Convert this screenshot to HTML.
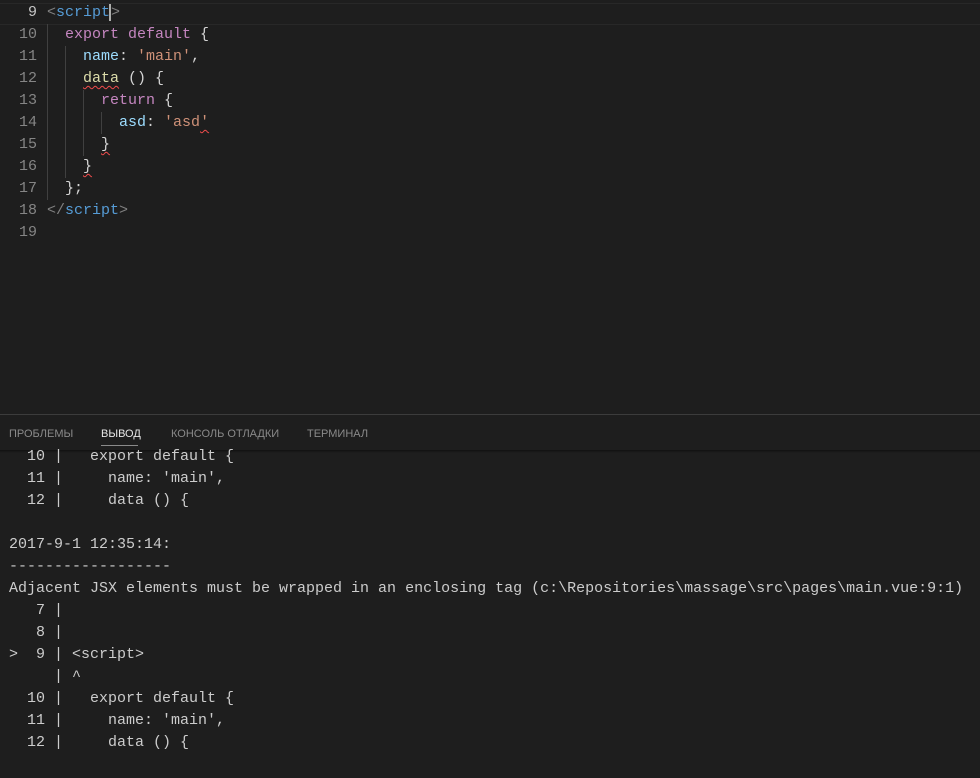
<!DOCTYPE html><html><head><meta charset="utf-8"><style>
body{margin:0;width:980px;height:778px;background:#1e1e1e;overflow:hidden;position:relative;font-family:"Liberation Mono",monospace;font-size:15px}
.l{position:absolute;left:0;height:22px;line-height:22px;white-space:pre;color:#d4d4d4}
.n{position:absolute;width:37px;text-align:right;color:#858585}
.c{position:absolute;left:47px}
.k{color:#c586c0}.t{color:#569cd6}.p{color:#9cdcfe}.s{color:#ce9178}.f{color:#dcdcaa}.g{color:#808080}
.sq{text-decoration:underline wavy #f14c4c;text-decoration-thickness:1px;text-underline-offset:3px}
.o{position:absolute;left:9px;height:22px;line-height:22px;white-space:pre;color:#cccccc}
.tab{position:absolute;top:428px;font-family:"Liberation Sans",sans-serif;font-size:11px;color:#8a8a8a}
.ig{position:absolute;width:1px;background:#404040}
</style></head><body>
<div style="position:absolute;left:0;top:3px;width:980px;height:20px;border-top:1px solid #282828;border-bottom:1px solid #282828"></div>
<div class="ig" style="left:47px;top:24px;height:176px"></div>
<div class="ig" style="left:65px;top:46px;height:132px"></div>
<div class="ig" style="left:83px;top:90px;height:66px"></div>
<div class="ig" style="left:101px;top:112px;height:22px"></div>
<div class="l" style="top:2px"><span class="n" style="color:#c6c6c6">9</span><span class="c"><span class="g">&lt;</span><span class="t">script</span><span style="border-left:2px solid #aeafad;margin-left:-1px"></span><span class="g">&gt;</span></span></div>
<div class="l" style="top:24px"><span class="n">10</span><span class="c">  <span class="k">export default</span> {</span></div>
<div class="l" style="top:46px"><span class="n">11</span><span class="c">    <span class="p">name</span>: <span class="s">'main'</span>,</span></div>
<div class="l" style="top:68px"><span class="n">12</span><span class="c">    <span class="f sq">data</span> () {</span></div>
<div class="l" style="top:90px"><span class="n">13</span><span class="c">      <span class="k">return</span> {</span></div>
<div class="l" style="top:112px"><span class="n">14</span><span class="c">        <span class="p">asd</span>: <span class="s">'asd<span class="sq">'</span></span></span></div>
<div class="l" style="top:134px"><span class="n">15</span><span class="c">      <span class="sq">}</span></span></div>
<div class="l" style="top:156px"><span class="n">16</span><span class="c">    <span class="sq">}</span></span></div>
<div class="l" style="top:178px"><span class="n">17</span><span class="c">  };</span></div>
<div class="l" style="top:200px"><span class="n">18</span><span class="c"><span class="g">&lt;/</span><span class="t">script</span><span class="g">&gt;</span></span></div>
<div class="l" style="top:222px"><span class="n">19</span></div>
<div style="position:absolute;left:0;top:414px;width:980px;height:1px;background:#3c3c3c"></div>
<div class="tab" style="left:9px">ПРОБЛЕМЫ</div>
<div class="tab" style="left:101px;color:#e7e7e7">ВЫВОД</div>
<div style="position:absolute;left:101px;top:445px;width:37px;height:1px;background:#8a8a8a"></div>
<div class="tab" style="left:171px">КОНСОЛЬ ОТЛАДКИ</div>
<div class="tab" style="left:307px">ТЕРМИНАЛ</div>
<div style="position:absolute;left:0;top:450px;width:980px;height:3px;background:linear-gradient(#111,#1e1e1e)"></div>
<div class="o" style="top:446px">  10 |   export default {</div>
<div class="o" style="top:468px">  11 |     name: 'main',</div>
<div class="o" style="top:490px">  12 |     data () {</div>
<div class="o" style="top:534px">2017-9-1 12:35:14:</div>
<div class="o" style="top:556px">------------------</div>
<div class="o" style="top:578px">Adjacent JSX elements must be wrapped in an enclosing tag (c:\Repositories\massage\src\pages\main.vue:9:1)</div>
<div class="o" style="top:600px">   7 |</div>
<div class="o" style="top:622px">   8 |</div>
<div class="o" style="top:644px">&gt;  9 | &lt;script&gt;</div>
<div class="o" style="top:666px">     | ^</div>
<div class="o" style="top:688px">  10 |   export default {</div>
<div class="o" style="top:710px">  11 |     name: 'main',</div>
<div class="o" style="top:732px">  12 |     data () {</div>
</body></html>
